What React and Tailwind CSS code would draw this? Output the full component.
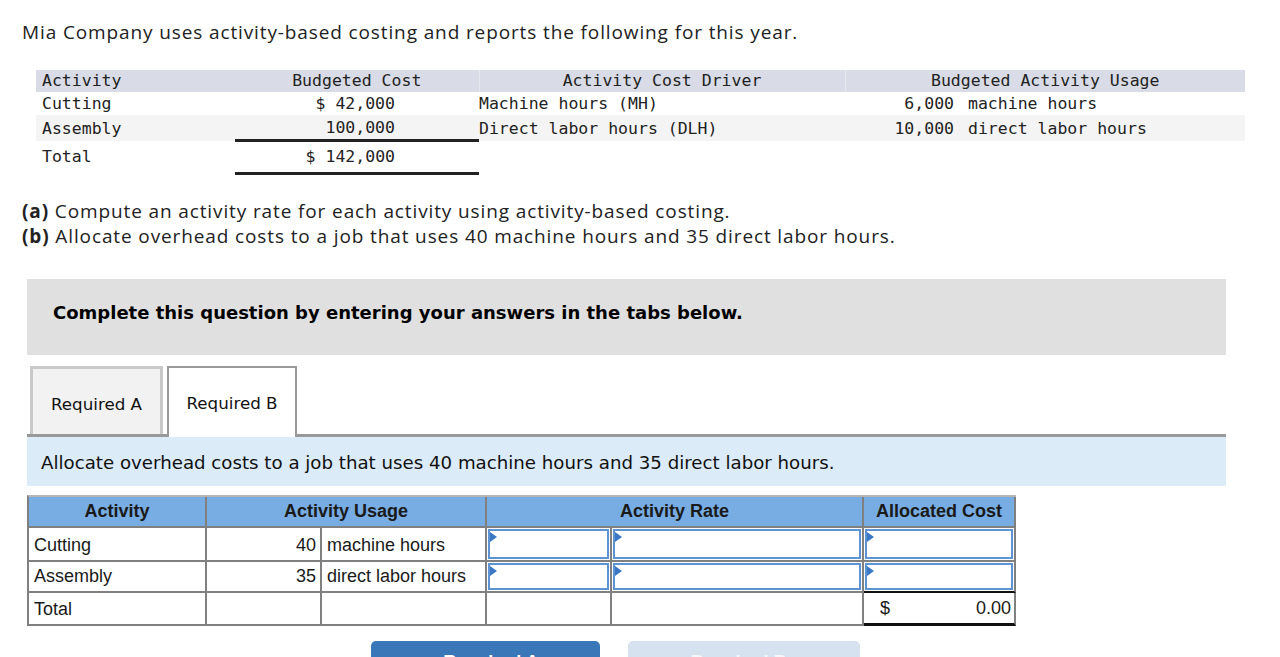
import React from "react";

const mono = { fontFamily: '"DejaVu Sans Mono", "Liberation Mono", monospace' };

function Tri() {
  return (
    <span className="absolute left-0 top-[1px] w-0 h-0 border-y-[5px] border-y-transparent border-l-[7px] border-l-[#3a78c6]" />
  );
}

function InputCell({ h, last }) {
  return (
    <td className={`p-[1px] border-r-2 border-b-2 ${last ? "border-b-[#111]" : "border-b-[#808080]"} border-r-[#808080]`}>
      <div className={`relative ${h} border-2 border-[#5d93d3] bg-white`}>
        <Tri />
      </div>
    </td>
  );
}

export default function App() {
  const ff = { fontFamily: '"Open Sans", "Liberation Sans", sans-serif' };
  const verd = { fontFamily: '"DejaVu Sans", Verdana, sans-serif' };
  const arial = { fontFamily: '"Liberation Sans", Arial, sans-serif' };
  const cell = "border-r-2 border-b-2 border-[#808080]";
  return (
    <div className="bg-white w-[1280px] text-[#1a1a1a]">
      <div style={ff} className="pl-[22px] pt-[19px] text-[19px] leading-[26px] tracking-[0.88px] text-[#222]">
        Mia Company uses activity-based costing and reports the following for this year.
      </div>

      <table style={mono} className="ml-[36px] mt-[25px] w-[1209px] table-fixed border-collapse text-[16.5px] leading-[22px] text-[#222]">
        <colgroup>
          <col className="w-[199px]" />
          <col className="w-[244px]" />
          <col className="w-[366px]" />
          <col className="w-[400px]" />
        </colgroup>
        <tbody>
          <tr className="bg-[#d9dce6] h-[22px]">
            <td className="pl-[6px]">Activity</td>
            <td className="text-center">Budgeted Cost</td>
            <td className="text-center border-l border-l-[#e6e8ef]">Activity Cost Driver</td>
            <td className="text-center border-l border-l-[#e6e8ef]">Budgeted Activity Usage</td>
          </tr>
          <tr className="bg-white h-[23px]">
            <td className="pl-[6px]">Cutting</td>
            <td className="text-right pr-[84px]">$ 42,000</td>
            <td>Machine hours (MH)</td>
            <td>
              <div className="flex">
                <span className="w-[109px] text-right">6,000</span>
                <span className="pl-[14px]">machine hours</span>
              </div>
            </td>
          </tr>
          <tr className="bg-[#f4f4f4] h-[25px]">
            <td className="pl-[6px] pt-[2px]">Assembly</td>
            <td className="text-right pr-[84px] pt-[2px] border-b-[3px] border-b-[#222]">100,000</td>
            <td className="pt-[2px]">Direct labor hours (DLH)</td>
            <td className="pt-[2px]">
              <div className="flex">
                <span className="w-[109px] text-right">10,000</span>
                <span className="pl-[14px]">direct labor hours</span>
              </div>
            </td>
          </tr>
          <tr className="h-[33px]">
            <td className="pl-[6px]">Total</td>
            <td className="text-right pr-[84px] border-b-[3px] border-b-[#222]">$ 142,000</td>
            <td></td>
            <td></td>
          </tr>
        </tbody>
      </table>

      <div style={ff} className="pl-[22px] mt-[24px] text-[19px] leading-[25px] tracking-[0.88px] text-[#222]">
        <div><span className="font-bold">(a)</span> Compute an activity rate for each activity using activity-based costing.</div>
        <div><span className="font-bold">(b)</span> Allocate overhead costs to a job that uses 40 machine hours and 35 direct labor hours.</div>
      </div>

      <div style={verd} className="ml-[27px] mt-[30px] w-[1199px] h-[76px] bg-[#e0e0e0] pl-[26px] pt-[23px] text-[18px] leading-[22px] font-bold text-black">
        Complete this question by entering your answers in the tabs below.
      </div>

      <div style={verd} className="ml-[30px] mt-[11px] flex items-start gap-[4px] text-[16.7px] text-[#111]">
        <div className="w-[133px] h-[68px] bg-[#f2f2f2] border-[3px] border-b-0 border-[#c9c9c9] flex items-center justify-center pt-[6px]">
          Required A
        </div>
        <div className="relative z-10 w-[130px] h-[71px] -mb-[3px] bg-white border-2 border-b-0 border-[#9a9a9a] flex items-center justify-center pt-[3px]">
          Required B
        </div>
      </div>
      <div className="ml-[27px] w-[1199px] h-[3px] bg-[#999]" />
      <div style={verd} className="ml-[27px] w-[1199px] h-[49px] bg-[#dbebf8] pl-[14px] pt-[15px] text-[18.2px] leading-[22px] text-[#111]">
        Allocate overhead costs to a job that uses 40 machine hours and 35 direct labor hours.
      </div>

      <table style={arial} className="ml-[27px] mt-[9px] w-[989px] table-fixed border-separate border-spacing-0 border-l-2 border-t-2 border-l-[#808080] border-t-[#b5b5b5] text-[18px] leading-[21px] text-[#1a1a1a]">
        <colgroup>
          <col className="w-[178px]" />
          <col className="w-[115px]" />
          <col className="w-[165px]" />
          <col className="w-[125px]" />
          <col className="w-[252px]" />
          <col className="w-[152px]" />
        </colgroup>
        <tbody>
          <tr className="bg-[#78ade3] font-bold h-[31px]">
            <td className={`${cell} text-center`}>Activity</td>
            <td colSpan={2} className={`${cell} text-center`}>Activity Usage</td>
            <td colSpan={2} className={`${cell} text-center`}>Activity Rate</td>
            <td className={`${cell} text-center`}>Allocated Cost</td>
          </tr>
          <tr className="h-[34px]">
            <td className={`${cell} pl-[5px] pt-[2px]`}>Cutting</td>
            <td className={`${cell} text-right pr-[4px] pt-[2px]`}>40</td>
            <td className={`${cell} pl-[5px] pt-[2px]`}>machine hours</td>
            <InputCell h="h-[30px]" />
            <InputCell h="h-[30px]" />
            <InputCell h="h-[30px]" />
          </tr>
          <tr className="h-[31px]">
            <td className={`${cell} pl-[5px]`}>Assembly</td>
            <td className={`${cell} text-right pr-[4px]`}>35</td>
            <td className={`${cell} pl-[5px]`}>direct labor hours</td>
            <InputCell h="h-[27px]" />
            <InputCell h="h-[27px]" />
            <InputCell h="h-[27px]" last />
          </tr>
          <tr className="h-[33px]">
            <td className={`${cell} pl-[5px] pt-[1px]`}>Total</td>
            <td className={cell}></td>
            <td className={cell}></td>
            <td className={cell}></td>
            <td className={cell}></td>
            <td className="border-r-2 border-r-[#808080] border-b-[3px] border-b-[#111] pt-[1px]">
              <div className="flex justify-between pl-[16px] pr-[3px]">
                <span>$</span>
                <span>0.00</span>
              </div>
            </td>
          </tr>
        </tbody>
      </table>

      <div style={arial} className="mt-[15px] pl-[371px] flex gap-[28px] text-[18px] font-bold">
        <div className="w-[229px] h-[46px] bg-[#3a77b8] rounded-t-[5px] text-white flex justify-center pt-[8px]">
          ‹ Required A
        </div>
        <div className="w-[232px] h-[46px] bg-[#d6e2f0] rounded-t-[5px] text-[#f4f7fb] flex justify-center pt-[8px]">
          Required B ›
        </div>
      </div>
    </div>
  );
}
